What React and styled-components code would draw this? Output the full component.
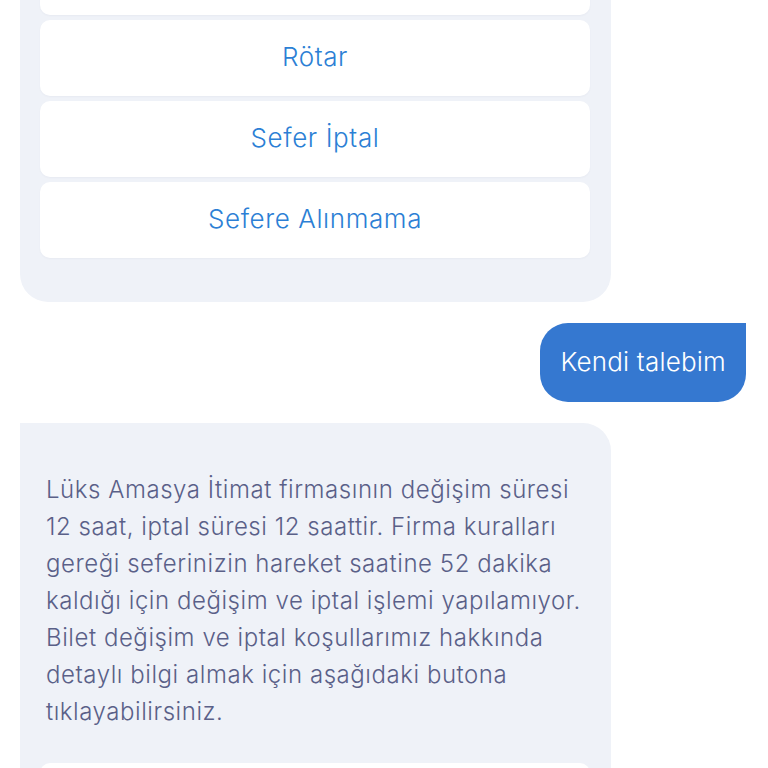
import React from "react";
import styled, { createGlobalStyle } from "styled-components";

const Global = createGlobalStyle`
  html, body { margin: 0; padding: 0; background: #ffffff; overflow: hidden; }
  body { font-family: Inter, "Noto Sans", "Liberation Sans", sans-serif; -webkit-font-smoothing: antialiased; }
`;

const Page = styled.div`
  width: 768px;
  height: 768px;
  overflow: hidden;
  background: #ffffff;
`;

const Thread = styled.div`
  display: flex;
  flex-direction: column;
  margin-top: -81px;
  padding: 0 22px 0 20px;
  gap: 21px;
`;

const BotBubble = styled.div`
  width: 591px;
  box-sizing: border-box;
  background: #eff2f8;
  border-radius: ${(p) => (p.$sharpTop ? "0 28px 28px 28px" : "28px")};
  padding: ${(p) => p.$pad};
  display: flex;
  flex-direction: column;
  gap: 5px;
`;

const OptionButton = styled.div`
  height: 76px;
  flex-shrink: 0;
  padding-bottom: 3px;
  box-sizing: border-box;
  background: #ffffff;
  border-radius: 10px;
  display: flex;
  align-items: center;
  justify-content: center;
  color: #2c7fd5;
  font-size: 26px;
  font-weight: 300;
  letter-spacing: 0.6px;
  box-shadow: 0 1px 2px rgba(40, 60, 110, 0.04);
`;

const UserRow = styled.div`
  display: flex;
  justify-content: flex-end;
`;

const UserBubble = styled.div`
  height: 79px;
  padding: 0 20px 2px;
  box-sizing: border-box;
  background: #3578d0;
  color: #ffffff;
  border-radius: 28px 0 28px 28px;
  display: flex;
  align-items: center;
  font-size: 26px;
  font-weight: 300;
  letter-spacing: 0.2px;
`;

const Message = styled.p`
  margin: 0 0 28px 6px;
  color: #5a6088;
  font-size: 24px;
  font-weight: 300;
  letter-spacing: 0.55px;
  line-height: 37px;
  white-space: nowrap;
`;

const options = ["Bilet Değişikliği", "Rötar", "Sefer İptal", "Sefere Alınmama"];

const lines = [
  "Lüks Amasya İtimat firmasının değişim süresi",
  "12 saat, iptal süresi 12 saattir. Firma kuralları",
  "gereği seferinizin hareket saatine 52 dakika",
  "kaldığı için değişim ve iptal işlemi yapılamıyor.",
  "Bilet değişim ve iptal koşullarımız hakkında",
  "detaylı bilgi almak için aşağıdaki butona",
  "tıklayabilirsiniz.",
];

export default function App() {
  return (
    <Page>
      <Global />
      <Thread>
        <BotBubble $pad="20px 21px 44px 20px">
          {options.map((o) => (
            <OptionButton key={o}>{o}</OptionButton>
          ))}
        </BotBubble>
        <UserRow>
          <UserBubble>Kendi talebim</UserBubble>
        </UserRow>
        <BotBubble $sharpTop $pad="48px 21px 0 20px">
          <Message>
            {lines.map((l, i) => (
              <React.Fragment key={i}>
                {l}
                {i < lines.length - 1 && <br />}
              </React.Fragment>
            ))}
          </Message>
          <OptionButton>Bilet Koşulları</OptionButton>
        </BotBubble>
      </Thread>
    </Page>
  );
}
